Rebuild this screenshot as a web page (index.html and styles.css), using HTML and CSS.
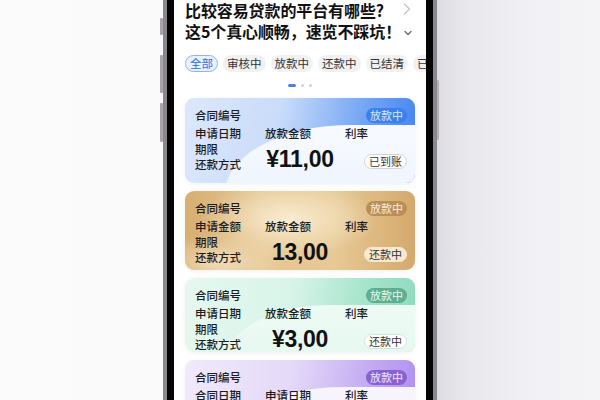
FILE: index.html
```html
<!DOCTYPE html>
<html lang="zh-CN">
<head>
<meta charset="utf-8">
<link rel="stylesheet" href="styles.css">
</head>
<body>
<div class="phone">
  <span class="btn btn-l1"></span>
  <span class="btn btn-l2"></span>
  <span class="btn btn-l3"></span>
  <span class="btn btn-r1"></span>
  <div class="bezel">
    <div class="screen">
      <div class="title-row">
        <h1 class="title"><span class="tl">比较容易贷款的平台有哪些?</span><span class="tl">这5个真心顺畅，速览不踩坑！</span></h1>
        <div class="title-icons">
          <svg class="ic-right" width="8" height="12" viewBox="0 0 8 12"><polyline points="1.5,1 6.5,6 1.5,11" fill="none" stroke="#c4c4c8" stroke-width="1.3" stroke-linecap="round" stroke-linejoin="round"/></svg>
          <svg class="ic-down" width="8" height="6" viewBox="0 0 8 6"><polyline points="1,1.5 4,4.5 7,1.5" fill="none" stroke="#6b6b70" stroke-width="1.3" stroke-linecap="round" stroke-linejoin="round"/></svg>
        </div>
      </div>
      <div class="chips">
        <span class="chip chip--on">全部</span>
        <span class="chip">审核中</span>
        <span class="chip">放款中</span>
        <span class="chip">还款中</span>
        <span class="chip">已结清</span>
        <span class="chip">已逾期</span>
      </div>
      <div class="dots"><span class="dash"></span><span class="dot"></span><span class="dot"></span></div>
      <div class="cards">
        <div class="card card--blue">
          <div class="card-grid">
            <span class="lbl head">合同编号</span>
            <span class="badge">放款中</span>
            <span class="lbl">申请日期</span><span class="lbl">放款金额</span><span class="lbl">利率</span>
            <div class="stack"><span>期限</span><span>还款方式</span></div>
            <div class="amount">¥11,00</div>
            <span class="pill">已到账</span>
          </div>
        </div>
        <div class="card card--gold">
          <div class="card-grid">
            <span class="lbl head">合同编号</span>
            <span class="badge">放款中</span>
            <span class="lbl">申请金额</span><span class="lbl">放款金额</span><span class="lbl">利率</span>
            <div class="stack"><span>期限</span><span>还款方式</span></div>
            <div class="amount">13,00</div>
            <span class="pill">还款中</span>
          </div>
        </div>
        <div class="card card--green">
          <div class="card-grid">
            <span class="lbl head">合同编号</span>
            <span class="badge">放款中</span>
            <span class="lbl">申请日期</span><span class="lbl">放款金额</span><span class="lbl">利率</span>
            <div class="stack"><span>期限</span><span>还款方式</span></div>
            <div class="amount">¥3,00</div>
            <span class="pill">还款中</span>
          </div>
        </div>
        <div class="card card--purple">
          <div class="card-grid">
            <span class="lbl head">合同编号</span>
            <span class="badge">放款中</span>
            <span class="lbl">合同日期</span><span class="lbl">申请日期</span><span class="lbl">利率</span>
            <div class="stack"><span>期限</span><span>还款方式</span></div>
            <div class="amount">¥5,00</div>
            <span class="pill">还款中</span>
          </div>
        </div>
      </div>
    </div>
  </div>
</div>
</body>
</html>
```

FILE: styles.css
```css
* { box-sizing: border-box; margin: 0; padding: 0; }

html, body { height: 400px; overflow: hidden; }

body {
  font-family: "Noto Sans CJK SC", "Noto Sans", sans-serif;
  background: linear-gradient(90deg, #fbfbfc 0%, #f8f8fa 72%, #dcdce2 72.9%, #e8e8ed 78%, #f1f1f5 88%, #f4f4f7 100%);
  display: flex;
  justify-content: center;
}

.phone {
  position: relative;
  width: 274px;
  height: 420px;
  padding: 0 4px;
  background: linear-gradient(90deg, #8a868e 0%, #b2aeb4 40%, #8a868e 100%);
}

.btn {
  position: absolute;
  width: 3px;
  background: #a8a4aa;
  border-radius: 1px;
}
.btn-l1 { left: -3px; top: 18px; height: 17px; }
.btn-l2 { left: -3px; top: 55px; height: 38px; }
.btn-l3 { left: -3px; top: 103px; height: 39px; }
.btn-r1 { right: -2px; top: 80px; height: 60px; width: 2px; background: #b4b0b6; }

.bezel {
  height: 100%;
  background: #050505;
  padding: 0 7px;
}

.screen {
  height: 100%;
  background: #ffffff;
  overflow: hidden;
  padding: 0 11px;
}

.title-row {
  display: flex;
  justify-content: space-between;
}

.title {
  display: flex;
  flex-direction: column;
  font-size: 16px;
  font-weight: 700;
  color: #111;
  white-space: nowrap;
  letter-spacing: -0.1px;
}
.tl {
  display: block;
  height: 21px;
  line-height: 21px;
}

.title-icons {
  display: flex;
  flex-direction: column;
  align-items: flex-end;
  padding-top: 3px;
  padding-right: 4px;
  gap: 15px;
}
.ic-down { margin-right: -1px; }

.chips {
  display: flex;
  gap: 5px;
  margin-top: 13px;
  white-space: nowrap;
}

.chip {
  flex: none;
  height: 17px;
  line-height: 15px;
  padding: 0 3px;
  border: 1px solid transparent;
  border-radius: 9px;
  background: #f1f1f3;
  font-size: 11.5px;
  color: #333;
}
.chip--on {
  background: #e9f1fd;
  border-color: #8fb3ea;
  color: #2f6fd6;
  padding: 0 4px;
}

.dots {
  display: flex;
  justify-content: center;
  align-items: center;
  gap: 5px;
  height: 3px;
  margin-top: 12px;
  padding-right: 1px;
}
.dash { width: 8px; height: 3px; border-radius: 2px; background: #4a86e8; }
.dot { width: 3px; height: 3px; border-radius: 50%; background: #cfcfd4; }

.cards {
  display: flex;
  flex-direction: column;
  gap: 8px;
  margin-top: 11px;
}

.card {
  position: relative;
  overflow: hidden;
  border-radius: 9px;
  padding: 8px 8px 0 10px;
  box-shadow: 0 1px 4px rgba(40, 50, 80, 0.08);
}
.card::before {
  content: "";
  position: absolute;
  left: 40px;
  top: 27px;
  right: -20px;
  bottom: -10px;
  border-top-left-radius: 130px 70px;
}

.card--blue { height: 85px; background: linear-gradient(100deg, #dce7fb 0%, #cadcfa 40%, #72a4f4 75%, #3f82ef 100%); }
.card--blue::before { background: linear-gradient(180deg, #f8faff 0%, #eef4fe 100%); }
.card--gold {
  height: 79px;
  background:
    radial-gradient(ellipse 55% 70% at 45% 35%, rgba(250, 238, 212, 0.95), rgba(250, 238, 212, 0) 70%),
    radial-gradient(ellipse 40% 50% at 15% 90%, rgba(246, 230, 200, 0.8), rgba(246, 230, 200, 0) 70%),
    linear-gradient(90deg, #d7ae72 0%, #e6c793 35%, #e7c995 65%, #d4a96d 100%);
}
.card--gold::before { display: none; }
.card--green { height: 74px; background: linear-gradient(100deg, #e6f8ef 0%, #d8f4e8 45%, #a6e4cc 75%, #8cdabd 100%); }
.card--green::before { background: linear-gradient(180deg, #eefbf5 0%, #e6f8f0 100%); }
.card--purple { height: 80px; background: linear-gradient(100deg, #f0eafb 0%, #e4d9f8 45%, #c2a9f2 78%, #ad8eee 100%); }
.card--purple::before { background: linear-gradient(180deg, #f8f5fe 0%, #f3effc 100%); }

.card-grid {
  position: relative;
  display: grid;
  grid-template-columns: 70px 80px 1fr;
  grid-template-rows: 18px 18px 30px;
  align-items: center;
}

.lbl {
  font-size: 11.5px;
  line-height: 15px;
  font-weight: 500;
  color: #1c1c1e;
  white-space: nowrap;
}
.head { grid-column: 1 / 3; }

.badge {
  justify-self: end;
  height: 15px;
  line-height: 15px;
  padding: 0 4px;
  border-radius: 8px;
  font-size: 11px;
  white-space: nowrap;
}
.card--blue .badge { background: #3c80ea; color: #dde9ff; }
.card--gold .badge { background: #b98f57; color: #fbeedb; }
.card--green .badge { background: #5fae8f; color: #e6fbf1; }
.card--purple .badge { background: #8862d2; color: #f1e9ff; }

.stack {
  display: flex;
  flex-direction: column;
  font-size: 11.5px;
  line-height: 15px;
  font-weight: 500;
  color: #1c1c1e;
  white-space: nowrap;
  align-self: stretch;
}

.amount {
  width: 70px;
  text-align: center;
  font-family: "Liberation Sans", Arial, sans-serif;
  font-weight: 700;
  font-size: 23px;
  line-height: 26px;
  color: #111;
  letter-spacing: -0.3px;
  align-self: center;
  margin-top: 3px;
}

.pill {
  justify-self: end;
  align-self: end;
  margin-bottom: 3px;
  height: 15px;
  line-height: 13px;
  padding: 0 4px;
  border-radius: 8px;
  border: 1px solid #d4d4d8;
  background: #fff;
  font-size: 11px;
  color: #333;
  white-space: nowrap;
}
.card--gold .pill { background: #f7e9d0; border-color: #f7e9d0; }
.card--green .pill { border-color: #cfe6dc; }
```
